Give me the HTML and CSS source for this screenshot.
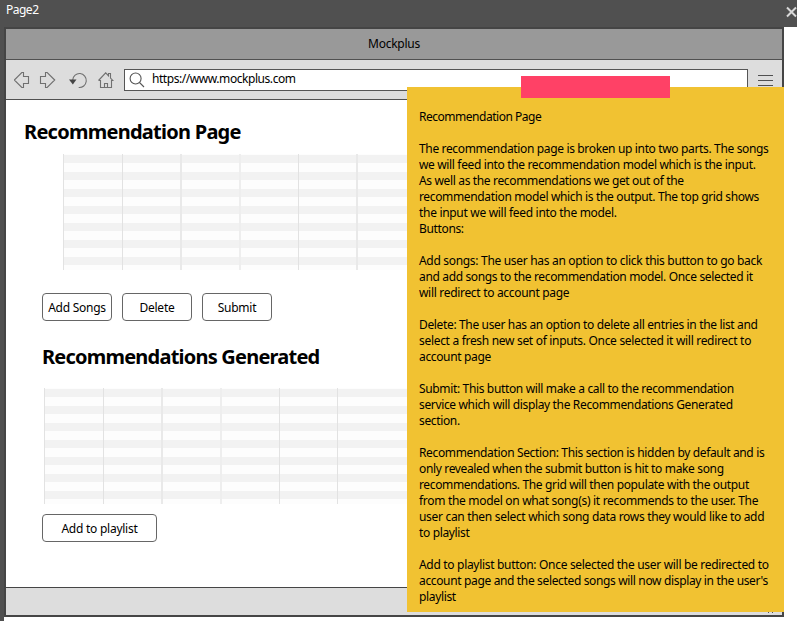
FILE: index.html
```html
<!DOCTYPE html>
<html lang="en">
<head>
<meta charset="utf-8">
<title>Page2</title>
<link rel="stylesheet" href="styles.css">
</head>
<body>
<header class="topbar"><span class="page-name">Page2</span>
<svg class="close" width="11" height="12" viewBox="0 0 11 12"><path d="M1 1.500l9 9M10 1.500l-9 9" stroke="#d8d8d8" stroke-width="2"/></svg></header>
<div class="stage">
<div class="window">
  <div class="titlebar"><span class="t-mock">Mockplus</span></div>
  <div class="toolbar">
    <svg class="nav" width="110" height="20" viewBox="0 0 110 20" fill="none" stroke="#707070" stroke-width="1.1">
      <path d="M.3 10L7.800 2.500H9.500V6.500H14.500V13.500H9.500V17.500H7.800Z"/>
      <path d="M40.700 10L33.200 2.500H31.500V6.500H26.500V13.500H31.500V17.500H33.200Z"/>
      <path d="M58.700 10A6.800 7 0 1 1 64.700 17.500"/>
      <path d="M55 9.500h7.500l-3.700 5z" fill="#444" stroke="none"/>
      <path d="M84.500 10.500L91.700 2.800l2.800 3V3.500h2V8l2.300 2.500H97.500V17.500H86.500V10.500H84.500M90.500 17V13.500h3V17"/>
    </svg>
    <div class="address">
      <svg width="16" height="16" viewBox="0 0 16 16" fill="none" stroke="#555" stroke-width="1.100"><circle cx="6.600" cy="6.500" r="5.500"/><path d="M10.500 10.500l4.500 4.500"/></svg>
      <span class="t-url">https://www.mockplus.com</span>
    </div>
    <div class="menu"><i></i><i></i><i></i></div>
  </div>
  <main class="content">
    <h1 class="h-page">Recommendation Page</h1>
    <div class="grid grid-input"><i></i><i></i><i class="soft"></i><i class="faint"></i><i></i><i class="soft"></i></div>
    <div class="actions">
      <button class="btn">Add Songs</button><button class="btn">Delete</button><button class="btn">Submit</button>
    </div>
    <h2 class="h-gen">Recommendations Generated</h2>
    <div class="grid grid-output"><i></i><i></i><i class="soft"></i><i class="faint"></i><i></i><i></i></div>
    <button class="btn wide">Add to playlist</button>
  </main>
  <footer class="status"><svg width="8" height="2" viewBox="0 0 8 2"><path d="M1 .5h1M5 .5h1" stroke="#555"/></svg></footer>
</div>
<aside class="note">
<div class="tape"></div>
<p class="tight">Recommendation Page</p>
<p>The recommendation page is broken up into two parts. The songs<br>we will feed into the recommendation model which is the input.<br>As well as the recommendations we get out of the<br>recommendation model which is the output. The top grid shows<br><span class="loose">the input we will feed into the model.</span><br>Buttons:</p>
<p><span class="loose">Add songs: The user has an option to click this button to go back</span><br>and add songs to the recommendation model. Once selected it<br><span class="loose">will redirect to account page</span></p>
<p>Delete: The user has an option to delete all entries in the list and<br><span class="loose">select a fresh new set of inputs. Once selected it will redirect to</span><br>account page</p>
<p>Submit: This button will make a call to the recommendation<br>service which will display the Recommendations Generated<br>section.</p>
<p>Recommendation Section: This section is hidden by default and is<br>only revealed when the submit button is hit to make song<br>recommendations. The grid will then populate with the output<br><span class="loose">from the model on what song(s) it recommends to the user. The<br>user can then select which song data rows they would like to add</span><br>to playlist</p>
<p><span class="loose">Add to playlist button: Once selected the user will be redirected to</span><br>account page and the selected songs will now display in the user's<br>playlist</p>
</aside>
</div>
</body>
</html>
```
FILE: styles.css
```css
* { box-sizing: border-box; }
body { margin: 0; height: 621px; overflow: hidden; background: #fff; color: #000; font: 12px/16px "Noto Sans", "Open Sans", sans-serif; letter-spacing: -.25px; }
.topbar { height: 27px; background: #505050; color: #fff; display: flex; justify-content: space-between; padding: 2px 0 0 6px; }
.page-name { letter-spacing: -.5px; }
.close { margin-top: 4px; }
.stage { position: relative; height: 594px; border-left: 4px solid #505050; }
.window { width: 780px; height: 590px; border: 2px solid #454545; display: flex; flex-direction: column; }
.titlebar { height: 31px; background: #999; border-bottom: 1px solid #505050; text-align: center; padding-top: 7px; }
.toolbar { height: 40px; background: #ddd; border-bottom: 1px solid #505050; display: flex; align-items: flex-start; }
.nav { margin: 10px 0 0 8px; flex: none; }
.address { width: 624px; height: 22px; margin-top: 9px; background: #fff; border: 1px solid #555; display: flex; padding: 2px 0 0 5px; gap: 6px; }
.address svg { margin-left: -1px; margin-right: 1px; }
.t-url { letter-spacing: -.44px; margin-top: -1px; }
.menu { width: 15px; margin: 15px 0 0 10px; display: flex; flex-direction: column; gap: 4px; }
.menu i { height: 1px; background: #505050; }
.content { height: 487px; padding-top: 20px; }
h1, h2 { margin: 0; font-size: 20px; line-height: 24px; font-weight: 700; letter-spacing: -.74px; white-space: nowrap; }
.h-page { margin-left: 18px; }
.grid { width: 345px; height: 116px; display: grid; grid-template-columns: 59px 58px 59px 59px 58px 52px; background: repeating-linear-gradient(#f2f2f2 0 8px, #fdfdfd 8px 17px) 0 1px; }
.grid i { border-left: 1px solid #e2e2e2; }
.grid .soft { border-left: 2px solid #e9e9e9; }
.grid .faint { border-left: 2px solid #eee; }
.grid-input { margin: 10px 0 0 57px; }
.actions { display: flex; gap: 10px; margin: 23px 0 0 36px; }
.btn { width: 70px; height: 28px; padding: 1px 0 0; border: 1px solid #666; border-radius: 4px; background: #fff; color: #000; font: inherit; letter-spacing: inherit; }
.h-gen { margin: 24px 0 0 36px; letter-spacing: -.78px; }
.grid-output { width: 364px; margin: 19px 0 0 38px; grid-template-columns: 59px 58px 59px 59px 58px 71px; }
.wide { display: block; width: 115px; margin: 10px 0 0 36px; }
.status { height: 28px; border-top: 1px solid #454545; background: #ddd; display: flex; justify-content: flex-end; align-items: flex-end; padding: 0 7px 1px 0; }
.note { position: absolute; left: 403px; top: 60px; width: 377px; height: 525px; padding: 22px 0 0 12px; background: #f1c232; white-space: nowrap; letter-spacing: -.35px; }
.note p { margin: 0 0 16px; }
.note .tight { letter-spacing: -.48px; }
.loose { letter-spacing: -.31px; }
.tape { position: absolute; left: 114px; top: -11px; width: 149px; height: 22px; background: #ff4166; }
```
